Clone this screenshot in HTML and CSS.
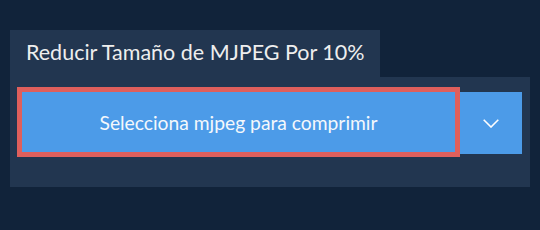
FILE: index.html
```html
<!DOCTYPE html>
<html lang="es">
<head>
    <meta charset="UTF-8">
    <meta name="viewport" content="width=device-width, initial-scale=1.0">
    <title>Reducir Tamaño de MJPEG</title>
    <link rel="stylesheet" href="styles.css">
</head>
<body>

<div class="container">
    <div class="tab">Reducir Tamaño de MJPEG Por 10%</div>

    <div class="panel">
        <div class="upload-row">
            <button class="btn-main">Selecciona mjpeg para comprimir</button>
            <button class="btn-more" aria-label="Más opciones">
                <svg width="16" height="9" viewBox="0 0 16 9">
                    <polyline points="0.7,0.7 8,8 15.3,0.7" fill="none" stroke="#fff" stroke-width="1.6"/>
                </svg>
            </button>
        </div>
    </div>
</div>

</body>
</html>
```

FILE: styles.css
```css
body {
    font-family: Lato, "Open Sans", sans-serif;
    background-color: #11233a;
    margin: 0;
    padding: 0;
}

.container {
    padding: 30px 10px;
}

.tab {
    display: inline-block;
    width: 370px;
    height: 47px;
    box-sizing: border-box;
    padding: 7px 0 0 16px;
    background-color: #223650;
    color: #eeeeee;
    font-size: 21.5px;
    line-height: 30px;
}

.panel {
    background-color: #223650;
    padding: 10px 8px 30px 7px;
}

.upload-row {
    display: flex;
    align-items: flex-start;
}

.btn-main {
    width: 443px;
    height: 70px;
    background-color: #4c9be8;
    border: 5px solid #df5f5c;
    color: #f4f8fc;
    font-family: Lato, "Open Sans", sans-serif;
    font-size: 19.25px;
    padding: 0;
    cursor: pointer;
}

.btn-more {
    width: 62px;
    height: 62px;
    margin-top: 5px;
    background-color: #4c9be8;
    border: none;
    padding: 0;
    display: flex;
    align-items: center;
    justify-content: center;
    cursor: pointer;
}
```
